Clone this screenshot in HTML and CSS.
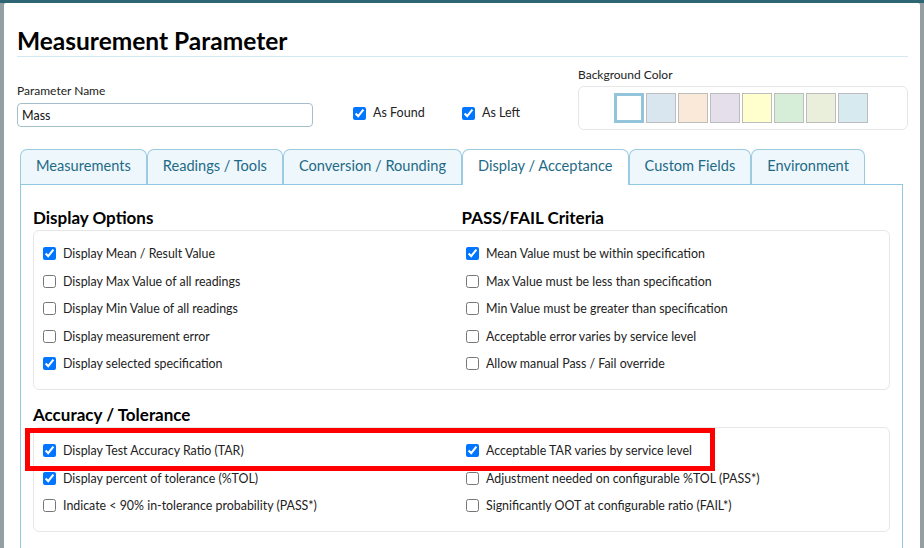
FILE: index.html
```html
<!DOCTYPE html>
<html>
<head>
<meta charset="utf-8">
<link rel="stylesheet" href="styles.css">
</head>
<body>
<div class="backdrop-bar"></div>
<div class="modal">
  <h1 class="modal-title">Measurement Parameter</h1>
  <div class="form-row">
    <div class="field-name">
      <label class="field-label">Parameter Name</label>
      <input class="text-input" type="text" value="Mass">
    </div>
    <div class="flags">
      <label class="check check-found"><input type="checkbox" checked><span>As Found</span></label>
      <label class="check"><input type="checkbox" checked><span>As Left</span></label>
    </div>
    <div class="bg-color">
      <div class="field-label">Background Color</div>
      <div class="swatch-box">
        <span class="swatch selected" style="background:#ffffff"></span>
        <span class="swatch" style="background:#d9e5ef"></span>
        <span class="swatch" style="background:#fae8d9"></span>
        <span class="swatch" style="background:#e4dfea"></span>
        <span class="swatch" style="background:#feffcc"></span>
        <span class="swatch" style="background:#d6edd7"></span>
        <span class="swatch" style="background:#e9efda"></span>
        <span class="swatch" style="background:#d7eaf0"></span>
      </div>
    </div>
  </div>

  <div class="tabs">
    <div class="tab">Measurements</div>
    <div class="tab">Readings / Tools</div>
    <div class="tab">Conversion / Rounding</div>
    <div class="tab active">Display / Acceptance</div>
    <div class="tab">Custom Fields</div>
    <div class="tab">Environment</div>
  </div>
  <div class="panel">
    <div class="heads">
      <h2 class="section-title">Display Options</h2>
      <h2 class="section-title">PASS/FAIL Criteria</h2>
    </div>
    <div class="option-box">
      <div class="col">
        <label class="opt"><input type="checkbox" checked><span>Display Mean / Result Value</span></label>
        <label class="opt"><input type="checkbox"><span>Display Max Value of all readings</span></label>
        <label class="opt"><input type="checkbox"><span>Display Min Value of all readings</span></label>
        <label class="opt"><input type="checkbox"><span>Display measurement error</span></label>
        <label class="opt"><input type="checkbox" checked><span>Display selected specification</span></label>
      </div>
      <div class="col">
        <label class="opt"><input type="checkbox" checked><span>Mean Value must be within specification</span></label>
        <label class="opt"><input type="checkbox"><span>Max Value must be less than specification</span></label>
        <label class="opt"><input type="checkbox"><span>Min Value must be greater than specification</span></label>
        <label class="opt"><input type="checkbox"><span>Acceptable error varies by service level</span></label>
        <label class="opt"><input type="checkbox"><span>Allow manual Pass / Fail override</span></label>
      </div>
    </div>

    <div class="heads heads-second">
      <h2 class="section-title">Accuracy / Tolerance</h2>
    </div>
    <div class="option-box accuracy">
      <div class="col">
        <label class="opt"><input type="checkbox" checked><span>Display Test Accuracy Ratio (TAR)</span></label>
        <label class="opt"><input type="checkbox" checked><span>Display percent of tolerance (%TOL)</span></label>
        <label class="opt"><input type="checkbox"><span>Indicate &lt; 90% in-tolerance probability (PASS*)</span></label>
      </div>
      <div class="col">
        <label class="opt"><input type="checkbox" checked><span>Acceptable TAR varies by service level</span></label>
        <label class="opt"><input type="checkbox"><span>Adjustment needed on configurable %TOL (PASS*)</span></label>
        <label class="opt"><input type="checkbox"><span>Significantly OOT at configurable ratio (FAIL*)</span></label>
      </div>
      <div class="highlight"></div>
    </div>
  </div>
</div>
</body>
</html>
```

FILE: styles.css
```css
* { box-sizing: border-box; }
html, body {
  margin: 0;
  padding: 0;
  height: 548px;
  overflow: hidden;
}
body {
  background: #939fa3;
  font-family: "Lato", "Noto Sans", sans-serif;
  color: #212529;
}
.backdrop-bar {
  height: 3px;
  background: #2e6676;
}
.modal {
  margin: 0 4px;
  background: #ffffff;
  height: 545px;
  padding: 22px 12px 0 13px;
  overflow: hidden;
  border-radius: 2px 2px 0 0;
}
.modal-title {
  margin: 0;
  font-size: 24.5px;
  line-height: 31px;
  font-weight: 700;
  color: #000;
  border-bottom: 1px solid #d4e8f3;
}
.form-row {
  display: flex;
  align-items: flex-end;
  padding-top: 10px;
}
.field-label {
  display: block;
  font-size: 12px;
  line-height: 16px;
  color: #222;
}
.field-name {
  width: 296px;
  margin-bottom: 3px;
}
.text-input {
  display: block;
  width: 296px;
  height: 24px;
  margin-top: 4px;
  border: 1px solid #a3bfcc;
  border-radius: 4px;
  padding: 0 4px;
  font-family: inherit;
  font-size: 12.5px;
  color: #111;
}
.flags {
  display: flex;
  margin-left: 40px;
  margin-bottom: 9px;
}
.check {
  display: flex;
  align-items: center;
  font-size: 12.5px;
  line-height: 16px;
  color: #222;
}
.check input, .opt input {
  margin: 0;
  width: 13px;
  height: 13px;
  flex: none;
}
.check span { margin-left: 7px; }
.check-found { width: 109px; }
.bg-color {
  margin-left: auto;
  width: 330px;
}
.swatch-box {
  margin-top: 3px;
  height: 44px;
  border: 1px solid #e6e6e6;
  border-radius: 6px;
  display: flex;
  justify-content: center;
  align-items: center;
  gap: 2px;
  padding-right: 4px;
}
.swatch {
  width: 30px;
  height: 30px;
  border: 1px solid #bdbdbd;
}
.swatch.selected {
  border: 3px solid #92c4dc;
}

.tabs {
  display: flex;
  margin: 19px 0 0 3px;
  position: relative;
  z-index: 1;
}
.tab {
  height: 35px;
  line-height: 32px;
  padding: 0 15px;
  font-size: 14.6px;
  color: #1f6a87;
  background: #eef8fc;
  border: 1px solid #9ccae0;
  border-bottom: none;
  border-radius: 7px 7px 0 0;
}
.tab.active {
  background: #fff;
  height: 36px;
  margin-bottom: -1px;
}
.panel {
  margin: 0 5px 0 3px;
  border: 1px solid #92c8e1;
  height: 400px;
  padding: 22px 12px 0 12px;
}
.heads {
  display: grid;
  grid-template-columns: 1fr 1fr;
  margin-bottom: 1px;
}
.heads-second {
  margin-top: 14px;
  margin-bottom: 1px;
}
.section-title {
  margin: 0;
  font-size: 17px;
  line-height: 22px;
  font-weight: 700;
  color: #000;
}
.option-box {
  position: relative;
  display: grid;
  grid-template-columns: 423px 1fr;
  border: 1px solid #e7e7e7;
  border-radius: 6px;
  padding: 9px 9px 11.5px 9px;
}
.opt {
  display: flex;
  align-items: center;
  height: 27.5px;
  font-size: 12.4px;
  color: #222;
}
.opt span { margin-left: 7px; }
.highlight {
  position: absolute;
  left: -9px;
  top: 0;
  width: 690px;
  height: 43px;
  border: 5px solid #ff0000;
}
```
